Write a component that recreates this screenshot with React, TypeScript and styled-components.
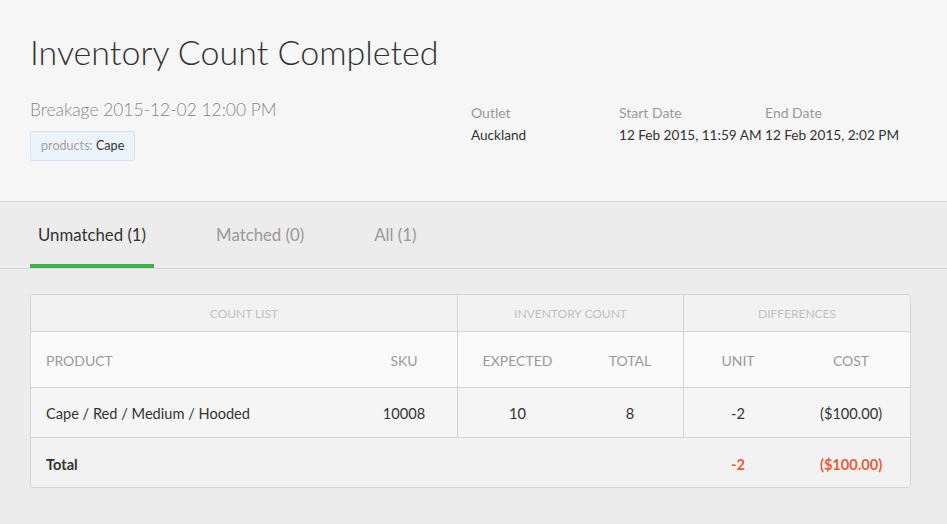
import React, { useState } from 'react';
import styled, { createGlobalStyle } from 'styled-components';

const GlobalStyle = createGlobalStyle`
  html, body {
    margin: 0;
    padding: 0;
    background: #ececec;
    font-family: Lato, "Liberation Sans", Arial, sans-serif;
    color: #333;
  }
`;

const PageHeader = styled.header`
  background: #f6f6f6;
  border-bottom: 1px solid #d8d8d8;
  padding: 30px 30px 0 30px;
  height: 171px;
`;

const Title = styled.h1`
  margin: 0;
  font-size: 34px;
  font-weight: 300;
  line-height: 44px;
  color: #333;
`;

const MetaRow = styled.div`
  display: grid;
  grid-template-columns: 441px 148px 146px auto;
  margin-top: 25px;
`;

const CountName = styled.div`
  font-size: 17.4px;
  font-weight: 300;
  color: #888;
  line-height: 22px;
`;

const FilterTag = styled.span`
  display: inline-block;
  margin-top: 10px;
  padding: 0 10px;
  height: 28px;
  line-height: 28px;
  font-size: 12.6px;
  background: #ebf3fb;
  border: 1px solid #d6e4f1;
  border-radius: 2px;
  color: #333;
`;

const FilterKey = styled.span`
  color: #a3a3a3;
`;

const MetaField = styled.div`
  padding-top: 2px;
  font-size: 13.6px;
  line-height: 23px;
  white-space: nowrap;
`;

const MetaLabel = styled.div`
  color: #999;
  font-size: 14px;
`;

const MetaValue = styled.div`
  color: #333;
`;

const TabBar = styled.nav`
  display: flex;
  gap: 54px;
  padding: 0 30px;
  height: 66px;
  border-bottom: 1px solid #d8d8d8;
`;

const Tab = styled.button<{ $active?: boolean }>`
  border: none;
  background: none;
  padding: 2px 8px 0;
  height: 66px;
  font-family: inherit;
  font-size: 16.8px;
  color: ${({ $active }) => ($active ? '#333' : '#999')};
  cursor: pointer;
  border-bottom: 4px solid ${({ $active }) => ($active ? '#3db34a' : 'transparent')};
`;

const Content = styled.main`
  padding: 25px 36px 30px 30px;
`;

const Table = styled.table`
  width: 881px;
  table-layout: fixed;
  border-collapse: separate;
  border-spacing: 0;
  border: 1px solid #d6d6d6;
  border-radius: 4px;
  overflow: hidden;
  font-size: 14.6px;
`;

const GroupCell = styled.th<{ $divider?: boolean }>`
  height: 36px;
  background: #f2f2f2;
  font-size: 12px;
  font-weight: 400;
  color: #c2c2c2;
  text-transform: uppercase;
  border-bottom: 1px solid #d6d6d6;
  border-right: ${({ $divider }) => ($divider ? '1px solid #d6d6d6' : 'none')};
  padding: 0;
`;

const HeadCell = styled.th<{ $align?: string; $divider?: boolean }>`
  height: 53px;
  background: #fafafa;
  font-size: 14px;
  font-weight: 400;
  color: #999;
  text-transform: uppercase;
  text-align: ${({ $align }) => $align || 'center'};
  padding: 2px 0 0 ${({ $align }) => ($align === 'left' ? '15px' : '0')};
  border-bottom: 1px solid #d6d6d6;
  border-right: ${({ $divider }) => ($divider ? '1px solid #d6d6d6' : 'none')};
`;

const Cell = styled.td<{ $align?: string; $divider?: boolean }>`
  height: 47px;
  background: #f5f5f5;
  color: #333;
  text-align: ${({ $align }) => $align || 'center'};
  padding: 2px 0 0 ${({ $align }) => ($align === 'left' ? '15px' : '0')};
  border-bottom: 1px solid #d6d6d6;
  border-right: ${({ $divider }) => ($divider ? '1px solid #d6d6d6' : 'none')};
`;

const TotalCell = styled.td<{ $align?: string; $negative?: boolean }>`
  height: 46px;
  background: #f2f2f2;
  font-weight: 700;
  color: ${({ $negative }) => ($negative ? '#ea5a3c' : '#333')};
  text-align: ${({ $align }) => $align || 'center'};
  padding: 3px 0 0 ${({ $align }) => ($align === 'left' ? '15px' : '0')};
`;

const tabs = [
  { key: 'unmatched', label: 'Unmatched (1)' },
  { key: 'matched', label: 'Matched (0)' },
  { key: 'all', label: 'All (1)' },
];

const rows = [
  { product: 'Cape / Red / Medium / Hooded', sku: '10008', expected: 10, total: 8, unit: '-2', cost: '($100.00)' },
];

export default function App() {
  const [activeTab, setActiveTab] = useState('unmatched');

  return (
    <>
      <GlobalStyle />
      <PageHeader>
        <Title>Inventory Count Completed</Title>
        <MetaRow>
          <div>
            <CountName>Breakage 2015-12-02 12:00 PM</CountName>
            <FilterTag>
              <FilterKey>products: </FilterKey>Cape
            </FilterTag>
          </div>
          <MetaField>
            <MetaLabel>Outlet</MetaLabel>
            <MetaValue>Auckland</MetaValue>
          </MetaField>
          <MetaField>
            <MetaLabel>Start Date</MetaLabel>
            <MetaValue>12 Feb 2015, 11:59 AM</MetaValue>
          </MetaField>
          <MetaField>
            <MetaLabel>End Date</MetaLabel>
            <MetaValue>12 Feb 2015, 2:02 PM</MetaValue>
          </MetaField>
        </MetaRow>
      </PageHeader>

      <TabBar>
        {tabs.map((t) => (
          <Tab key={t.key} $active={activeTab === t.key} onClick={() => setActiveTab(t.key)}>
            {t.label}
          </Tab>
        ))}
      </TabBar>

      <Content>
        <Table>
          <colgroup>
            <col style={{ width: 320 }} />
            <col style={{ width: 107 }} />
            <col style={{ width: 119 }} />
            <col style={{ width: 107 }} />
            <col style={{ width: 108 }} />
            <col style={{ width: 118 }} />
          </colgroup>
          <thead>
            <tr>
              <GroupCell colSpan={2} $divider>Count List</GroupCell>
              <GroupCell colSpan={2} $divider>Inventory Count</GroupCell>
              <GroupCell colSpan={2}>Differences</GroupCell>
            </tr>
            <tr>
              <HeadCell $align="left">Product</HeadCell>
              <HeadCell $divider>SKU</HeadCell>
              <HeadCell>Expected</HeadCell>
              <HeadCell $divider>Total</HeadCell>
              <HeadCell>Unit</HeadCell>
              <HeadCell>Cost</HeadCell>
            </tr>
          </thead>
          <tbody>
            {rows.map((r) => (
              <tr key={r.sku}>
                <Cell $align="left">{r.product}</Cell>
                <Cell $divider>{r.sku}</Cell>
                <Cell>{r.expected}</Cell>
                <Cell $divider>{r.total}</Cell>
                <Cell>{r.unit}</Cell>
                <Cell>{r.cost}</Cell>
              </tr>
            ))}
            <tr>
              <TotalCell $align="left">Total</TotalCell>
              <TotalCell />
              <TotalCell />
              <TotalCell />
              <TotalCell $negative>-2</TotalCell>
              <TotalCell $negative>($100.00)</TotalCell>
            </tr>
          </tbody>
        </Table>
      </Content>
    </>
  );
}
